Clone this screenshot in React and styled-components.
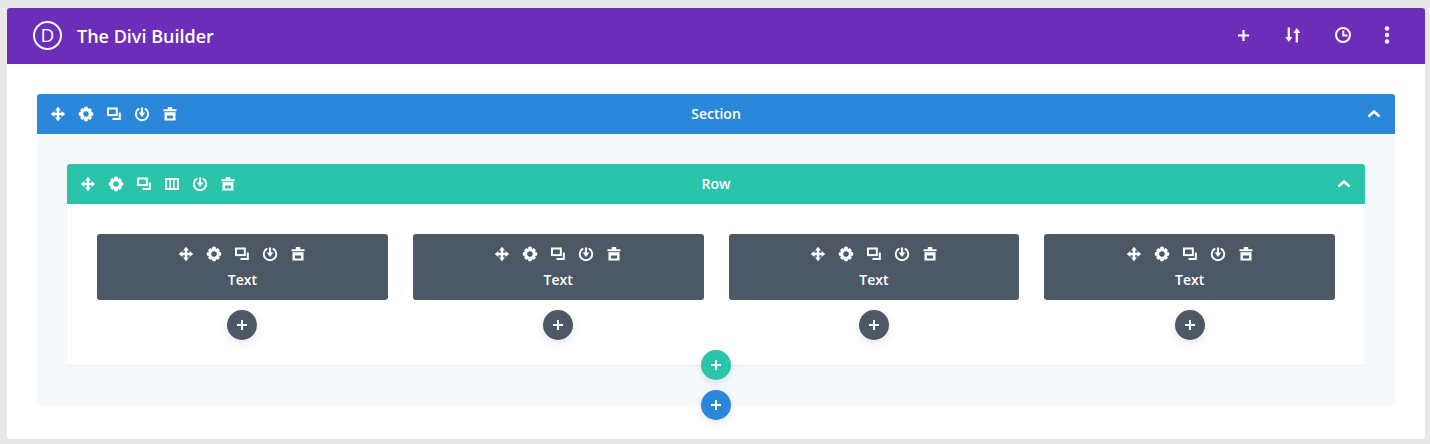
import React from 'react'
import styled, { createGlobalStyle } from 'styled-components'

const Global = createGlobalStyle`
  html, body { margin: 0; padding: 0; background: #e8e8e8; }
  body { font-family: "Open Sans", "Liberation Sans", sans-serif; }
`

const Page = styled.div`
  width: 1430px;
  height: 444px;
  padding: 8px 5px 5px 7px;
  box-sizing: border-box;
  overflow: hidden;
`

const Builder = styled.div`
  background: #fff;
  border-radius: 3px;
  height: 431px;
`

const Header = styled.header`
  height: 56px;
  background: #6c2eb9;
  border-radius: 3px 3px 0 0;
  display: flex;
  align-items: center;
  padding: 0 29px 0 26px;
  color: #fff;
`

const Logo = styled.div`
  width: 25px;
  height: 25px;
  border: 2px solid #fff;
  border-radius: 50%;
  display: flex;
  align-items: center;
  justify-content: center;
  font-size: 19px;
  font-weight: 400;
  line-height: 1;
  margin: -2px 15px 0 0;
`

const Title = styled.h1`
  margin: 0;
  font-size: 18px;
  font-weight: 600;
  flex: 1;
`

const HeaderTools = styled.div`
  display: flex;
  align-items: center;
  gap: 32px;
  margin-top: -2px;
`

const HeaderSlot = styled.div`
  width: 18px;
  display: flex;
  justify-content: center;
  margin-left: ${p => (p.$tight ? '-6px' : 0)};
`

const Body = styled.div`
  padding: 30px 30px 0;
`

const Section = styled.section`
  position: relative;
  background: #f6f9fc;
  border-radius: 3px;
  padding-bottom: 40px;
  box-shadow: 0 0 1px rgba(0, 0, 0, 0.14);
`

const Bar = styled.div`
  position: relative;
  height: 40px;
  box-sizing: border-box;
  padding-bottom: 2px;
  background: ${p => p.$color};
  border-radius: 3px 3px 0 0;
  display: flex;
  align-items: center;
  justify-content: center;
  color: #fff;
  font-size: 14px;
  font-weight: 600;
`

const BarTools = styled.div`
  position: absolute;
  left: 12px;
  top: 11px;
  display: flex;
  gap: 10px;
`

const Collapse = styled.div`
  position: absolute;
  right: 12px;
  top: 11px;
  display: flex;
`

const RowWrap = styled.div`
  padding: 30px 30px 0;
`

const Row = styled.div`
  position: relative;
  background: #fff;
  border-radius: 3px;
  box-shadow: 0 1px 2px rgba(0, 0, 0, 0.05);
`

const Columns = styled.div`
  display: grid;
  grid-template-columns: repeat(4, 1fr);
  column-gap: 25px;
  padding: 30px 30px 25px;
`

const Column = styled.div`
  display: flex;
  flex-direction: column;
  align-items: center;
`

const Module = styled.div`
  width: 100%;
  height: 66px;
  background: #4c5866;
  border-radius: 3px;
  color: #fff;
  display: flex;
  flex-direction: column;
  align-items: center;
  padding-top: 11px;
  box-sizing: border-box;
`

const ModuleTools = styled.div`
  display: flex;
  gap: 10px;
`

const ModuleLabel = styled.div`
  font-size: 14px;
  font-weight: 600;
  line-height: 19px;
  margin-top: 7px;
`

const AddButton = styled.div`
  width: 30px;
  height: 30px;
  border-radius: 50%;
  background: ${p => p.$color};
  display: flex;
  align-items: center;
  justify-content: center;
  box-shadow: 0 3px 9px rgba(0, 0, 0, 0.1);
  margin-top: ${p => (p.$inline ? '10px' : 0)};
`

const Floating = styled.div`
  position: absolute;
  left: 50%;
  bottom: -15px;
  transform: translateX(-50%);
`

const Svg = styled.svg`
  display: block;
  fill: none;
  stroke: none;
`

const Icon = ({ size = 18, children }) => (
  <Svg width={size} height={size} viewBox="0 0 18 18">{children}</Svg>
)

const Move = () => (
  <Icon>
    <path d="M9 4v10M4 9h10" stroke="#fff" strokeWidth="2.4" />
    <path fill="#fff" d="M9 1.8 12 5.4H6zM9 16.2 6 12.6h6zM1.8 9 5.4 6v6zM16.2 9 12.6 12V6z" />
  </Icon>
)

const Gear = () => (
  <Icon>
    <circle cx="9" cy="9" r="4.2" fill="none" stroke="#fff" strokeWidth="3" />
    <path fill="#fff" d="M7 4h4l-.4-2.200H7.400zM7 14h4l-.4 2.200H7.400zM4 7v4l-2.200-.4V7.400zM14 7v4l2.200-.4V7.400zM4.300 7l2.700-2.700-1.700-1.300-2.300 2.300zM13.700 11l-2.700 2.700 1.700 1.300 2.300-2.300zM11 4.300 13.700 7l1.300-1.700-2.300-2.300zM7 13.700 4.300 11 3 12.700 5.300 15z" />
  </Icon>
)

const Clone = () => (
  <Icon>
    <rect x="3" y="3.5" width="8.8" height="6.6" fill="none" stroke="#fff" strokeWidth="2" />
    <path d="M14.8 7.5v6.400H7.500" fill="none" stroke="#fff" strokeWidth="2" />
  </Icon>
)

const Columns3 = () => (
  <Icon>
    <rect x="3" y="4" width="12" height="10" fill="none" stroke="#fff" strokeWidth="2" />
    <path d="M7.200 4v10M10.800 4v10" stroke="#fff" strokeWidth="1.600" />
  </Icon>
)

const Power = () => (
  <Icon>
    <path d="M5.600 3.900a6.200 6.200 0 1 0 6.800 0" fill="none" stroke="#fff" strokeWidth="1.900" strokeLinecap="round" />
    <path d="M9 2.500v6" stroke="#fff" strokeWidth="2.200" />
    <path fill="#fff" d="M5.600 7.600h6.800L9 12z" />
  </Icon>
)

const Trash = () => (
  <Icon>
    <path fill="#fff" fillRule="evenodd" d="M6.800 2h4.400v2.300h4.300v2H2.500v-2h4.300zM3.500 7.300h11v8.200h-11zm2.500 3.200v3h6v-3z" />
  </Icon>
)

const Plus = ({ size = 10, weight = 2.4 }) => (
  <Svg width={size} height={size} viewBox="0 0 12 12">
    <path d="M6 0v12M0 6h12" stroke="#fff" strokeWidth={weight} />
  </Svg>
)

const Chevron = () => (
  <Icon>
    <path d="M3.500 11.500 9 6.500l5.500 5" fill="none" stroke="#fff" strokeWidth="2.600" />
  </Icon>
)

const SortArrows = () => (
  <Icon>
    <path d="M4.800 1.500v11M12.800 16.500V5.500" stroke="#fff" strokeWidth="2.200" />
    <path fill="#fff" d="M1.300 11h7l-3.500 5zM9.300 7h7l-3.500-5z" />
  </Icon>
)

const History = () => (
  <Icon>
    <circle cx="9" cy="9" r="7" fill="none" stroke="#fff" strokeWidth="2" />
    <path d="M9.300 4.500v5h4.200" fill="none" stroke="#fff" strokeWidth="2" />
  </Icon>
)

const Dots = () => (
  <Icon>
    <circle cx="9" cy="2.500" r="2.200" fill="#fff" />
    <circle cx="9" cy="9" r="2.200" fill="#fff" />
    <circle cx="9" cy="15.500" r="2.200" fill="#fff" />
  </Icon>
)

const COLUMNS = ['a', 'b', 'c', 'd']

const App = () => (
  <Page>
    <Global />
    <Builder>
      <Header>
        <Logo>D</Logo>
        <Title>The Divi Builder</Title>
        <HeaderTools>
          <HeaderSlot><Plus size={11} /></HeaderSlot>
          <HeaderSlot><SortArrows /></HeaderSlot>
          <HeaderSlot><History /></HeaderSlot>
          <HeaderSlot $tight><Dots /></HeaderSlot>
        </HeaderTools>
      </Header>
      <Body>
        <Section>
          <Bar $color="#2b87da">
            <BarTools>
              <Move /><Gear /><Clone /><Power /><Trash />
            </BarTools>
            Section
            <Collapse><Chevron /></Collapse>
          </Bar>
          <RowWrap>
            <Row>
              <Bar $color="#29c4a9">
                <BarTools>
                  <Move /><Gear /><Clone /><Columns3 /><Power /><Trash />
                </BarTools>
                Row
                <Collapse><Chevron /></Collapse>
              </Bar>
              <Columns>
                {COLUMNS.map(id => (
                  <Column key={id}>
                    <Module>
                      <ModuleTools>
                        <Move /><Gear /><Clone /><Power /><Trash />
                      </ModuleTools>
                      <ModuleLabel>Text</ModuleLabel>
                    </Module>
                    <AddButton $color="#4c5866" $inline><Plus /></AddButton>
                  </Column>
                ))}
              </Columns>
              <Floating>
                <AddButton $color="#29c4a9"><Plus /></AddButton>
              </Floating>
            </Row>
          </RowWrap>
          <Floating>
            <AddButton $color="#2b87da"><Plus /></AddButton>
          </Floating>
        </Section>
      </Body>
    </Builder>
  </Page>
)

export default App
